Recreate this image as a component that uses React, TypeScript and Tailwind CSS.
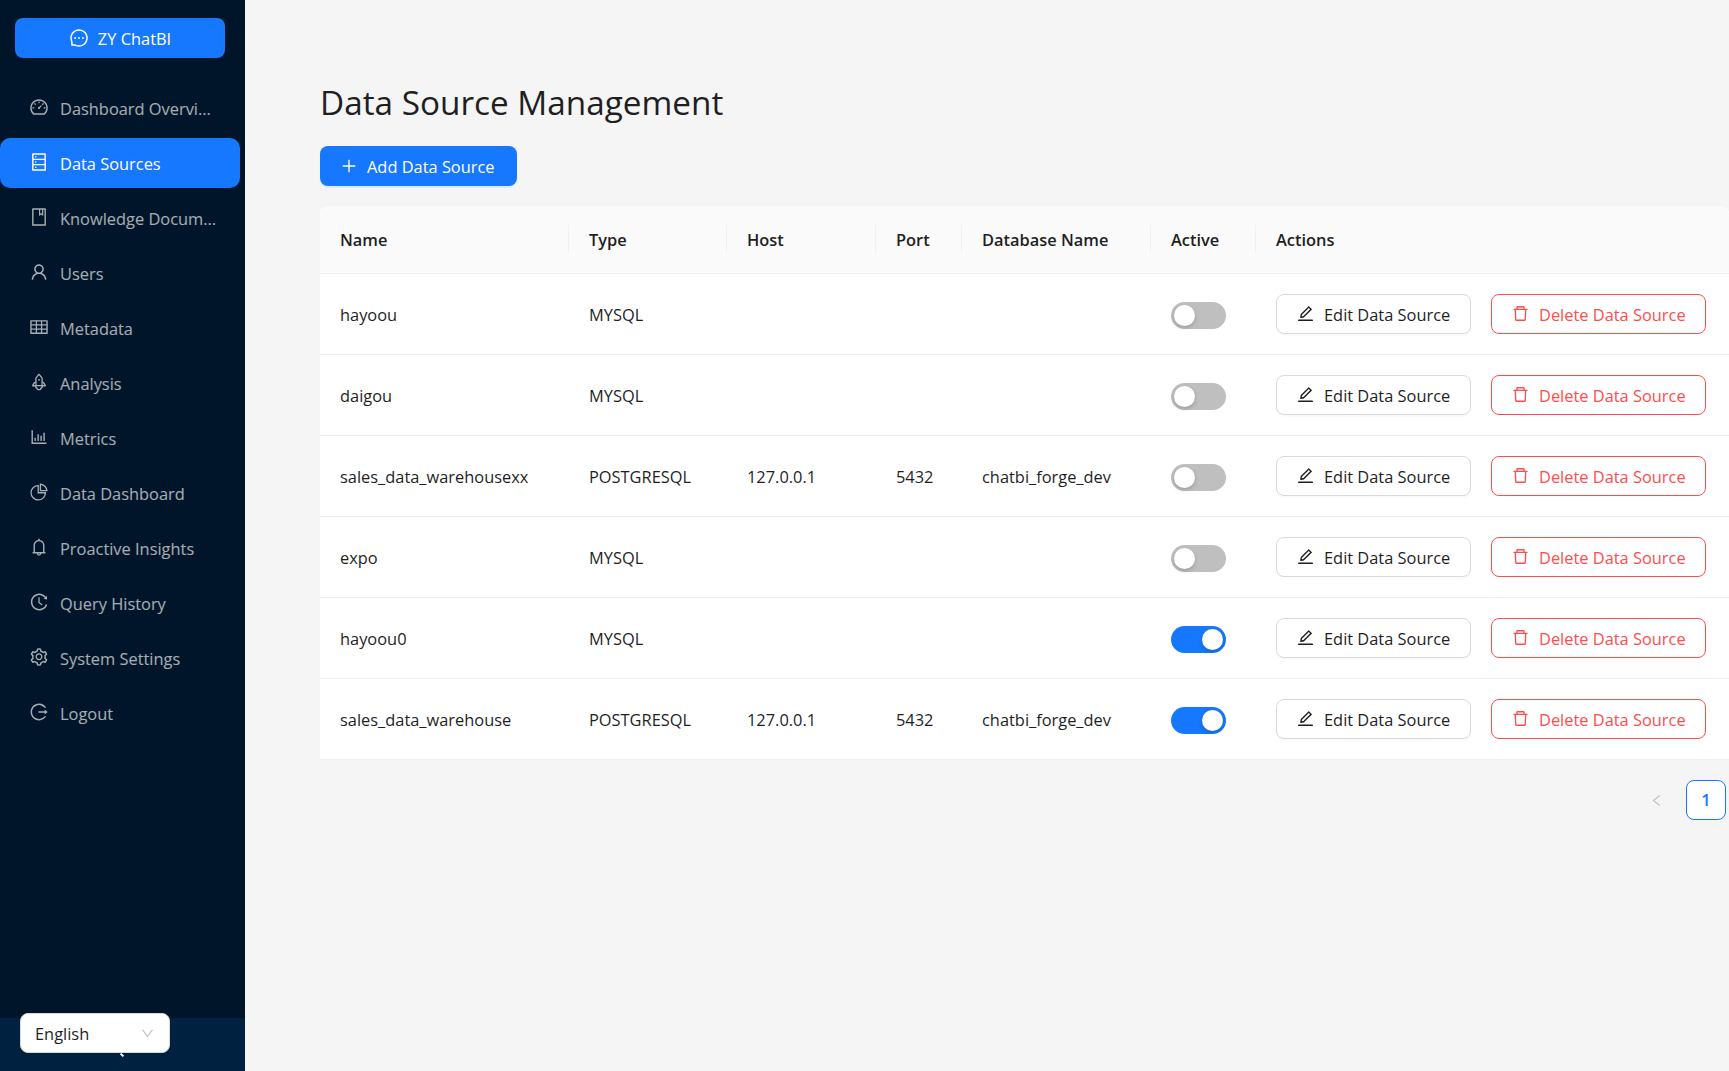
import React from 'react';
import {
  AiOutlineBarChart,
  AiOutlineBell,
  AiOutlineBook,
  AiOutlineDashboard,
  AiOutlineDatabase,
  AiOutlineDelete,
  AiOutlineDown,
  AiOutlineEdit,
  AiOutlineHistory,
  AiOutlineLeft,
  AiOutlineLogout,
  AiOutlineMessage,
  AiOutlinePieChart,
  AiOutlinePlus,
  AiOutlineRocket,
  AiOutlineSetting,
  AiOutlineTable,
  AiOutlineUser,
} from 'react-icons/ai';

const navItems = [
  { label: 'Dashboard Overvi...', icon: AiOutlineDashboard },
  { label: 'Data Sources', icon: AiOutlineDatabase, active: true },
  { label: 'Knowledge Docum...', icon: AiOutlineBook },
  { label: 'Users', icon: AiOutlineUser },
  { label: 'Metadata', icon: AiOutlineTable },
  { label: 'Analysis', icon: AiOutlineRocket },
  { label: 'Metrics', icon: AiOutlineBarChart },
  { label: 'Data Dashboard', icon: AiOutlinePieChart },
  { label: 'Proactive Insights', icon: AiOutlineBell },
  { label: 'Query History', icon: AiOutlineHistory },
  { label: 'System Settings', icon: AiOutlineSetting },
  { label: 'Logout', icon: AiOutlineLogout },
];

const rows = [
  { name: 'hayoou', type: 'MYSQL', host: '', port: '', db: '', active: false },
  { name: 'daigou', type: 'MYSQL', host: '', port: '', db: '', active: false },
  { name: 'sales_data_warehousexx', type: 'POSTGRESQL', host: '127.0.0.1', port: '5432', db: 'chatbi_forge_dev', active: false },
  { name: 'expo', type: 'MYSQL', host: '', port: '', db: '', active: false },
  { name: 'hayoou0', type: 'MYSQL', host: '', port: '', db: '', active: true },
  { name: 'sales_data_warehouse', type: 'POSTGRESQL', host: '127.0.0.1', port: '5432', db: 'chatbi_forge_dev', active: true },
];

const headers = [
  { label: 'Name', width: 'w-[249px]' },
  { label: 'Type', width: 'w-[158px]' },
  { label: 'Host', width: 'w-[149px]' },
  { label: 'Port', width: 'w-[86px]' },
  { label: 'Database Name', width: 'w-[189px]' },
  { label: 'Active', width: 'w-[105px]' },
  { label: 'Actions', width: '' },
];

const Switch = ({ on }: { on: boolean }) => (
  <span className={`relative block w-[55px] h-[27px] rounded-full ${on ? 'bg-[#1677ff]' : 'bg-[#bfbfbf]'}`}>
    <span className={`absolute top-[3px] w-[21px] h-[21px] rounded-full bg-white shadow-[0_2px_4px_rgba(0,35,11,0.2)] ${on ? 'right-[3px]' : 'left-[3px]'}`} />
  </span>
);

const App: React.FC = () => {
  return (
    <div className="flex h-screen overflow-hidden bg-[#f5f5f5] font-['Open_Sans',sans-serif] text-[16.4px] text-[#1f1f1f]">
      <aside className="relative flex flex-col w-[245px] shrink-0 bg-[#001529]">
        <div className="flex items-center justify-center gap-[9px] h-10 mt-[18px] ml-[15px] mr-[20px] rounded-lg bg-[#1677ff] text-white">
          <AiOutlineMessage className="w-5 h-5" />
          <span className="pt-[3px]">ZY ChatBI</span>
        </div>
        <nav className="flex flex-col gap-[5px] mt-[25px] mr-[5px]">
          {navItems.map(item => {
            const Icon = item.icon;
            return (
              <div
                key={item.label}
                className={`flex items-center gap-[11px] h-[50px] pl-[29px] rounded-[10px] ${item.active ? 'bg-[#1677ff] text-white' : 'text-white/65'}`}
              >
                <Icon className="w-5 h-5 shrink-0 -mt-[2px]" />
                <span className="whitespace-nowrap pt-[3px]">{item.label}</span>
              </div>
            );
          })}
        </nav>
        <div className="relative mt-auto h-[53px] bg-[#002140]">
          <div className="absolute left-5 -top-[5px] flex items-center justify-between w-[150px] h-10 pl-[14px] pr-[14px] rounded-lg bg-white border border-[#d9d9d9] text-[#1f1f1f]">
            <span className="pt-[3px]">English</span>
            <AiOutlineDown className="w-[15px] h-[15px] text-[#c4c4c4]" />
          </div>
          <span className="absolute left-[120px] top-[36px] w-[4px] h-[2px] bg-white rotate-45" />
        </div>
      </aside>

      <main className="flex-1 min-w-0 pl-[75px] pr-[3px]">
        <h1 className="mt-[79px] h-[46px] text-[33.3px] leading-[46px] font-normal">Data Source Management</h1>
        <button className="flex items-center gap-[9px] h-10 w-[197px] mt-[21px] pl-[20px] rounded-lg bg-[#1677ff] text-white shadow-[0_2px_0_rgba(5,145,255,0.1)]">
          <AiOutlinePlus className="w-[18px] h-[18px]" />
          <span className="pt-[2px]">Add Data Source</span>
        </button>

        <table className="mt-5 w-[1409px] table-fixed border-collapse bg-white rounded-t-lg overflow-hidden">
          <thead>
            <tr className="h-[67px] bg-[#fafafa] border-b border-[#f0f0f0]">
              {headers.map((h, i) => (
                <th key={h.label} className={`relative pl-5 pt-[3px] text-left font-semibold ${h.width}`}>
                  {h.label}
                  {i < headers.length - 1 && <span className="absolute right-0 top-[19px] h-7 w-px bg-[#f0f0f0]" />}
                </th>
              ))}
            </tr>
          </thead>
          <tbody>
            {rows.map(r => (
              <tr key={r.name} className="h-[81px] border-b border-[#f0f0f0]">
                <td className="pl-5 pt-[4px]">{r.name}</td>
                <td className="pl-5 pt-[4px]">{r.type}</td>
                <td className="pl-5 pt-[4px]">{r.host}</td>
                <td className="pl-5 pt-[4px]">{r.port}</td>
                <td className="pl-5 pt-[4px]">{r.db}</td>
                <td className="pl-5 pt-1"><Switch on={r.active} /></td>
                <td className="pl-5">
                  <div className="flex gap-5">
                    <button className="flex items-center gap-[9px] h-10 w-[195px] pl-[19px] rounded-lg border border-[#d9d9d9] bg-white shadow-[0_2px_0_rgba(0,0,0,0.02)] whitespace-nowrap">
                      <AiOutlineEdit className="w-[19px] h-[19px]" />
                      <span className="pt-[3px]">Edit Data Source</span>
                    </button>
                    <button className="flex items-center gap-[9px] h-10 w-[215px] pl-[19px] rounded-lg border border-[#ff4d4f] bg-white text-[#ff4d4f] whitespace-nowrap">
                      <AiOutlineDelete className="w-[19px] h-[19px]" />
                      <span className="pt-[3px]">Delete Data Source</span>
                    </button>
                  </div>
                </td>
              </tr>
            ))}
          </tbody>
        </table>

        <div className="flex items-center justify-end gap-[10px] mt-5 w-[1406px]">
          <span className="flex items-center justify-center w-10 h-10 pt-[2px] text-[#bfbfbf]">
            <AiOutlineLeft className="w-[15px] h-[15px]" />
          </span>
          <span className="flex items-center justify-center w-10 h-10 pt-[2px] rounded-lg border border-[#1677ff] bg-white font-semibold text-[#1677ff]">1</span>
        </div>
      </main>
    </div>
  );
};

export default App;
